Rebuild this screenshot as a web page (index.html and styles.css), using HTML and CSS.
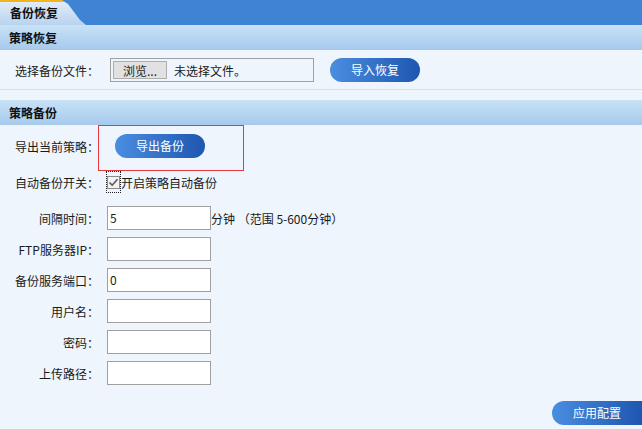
FILE: index.html
```html
<!DOCTYPE html>
<html lang="zh-CN">
<head>
<meta charset="utf-8">
<link rel="stylesheet" href="styles.css">
</head>
<body>
<div class="page">
  <div class="tabbar">
    <div class="tab">备份恢复</div>
  </div>

  <div class="sec-head">策略恢复</div>
  <div class="sec-body restore">
    <div class="row-restore">
      <span class="lbl-left">选择备份文件：</span>
      <div class="file">
        <span class="browse">浏览...</span>
        <span class="fname">未选择文件。</span>
      </div>
      <button class="btn btn-import">导入恢复</button>
    </div>
  </div>
  <div class="divider"></div>

  <div class="sec-head">策略备份</div>
  <div class="sec-body backup">
    <div class="form">
      <div class="row">
        <span class="lbl">导出当前策略：</span>
        <button class="btn btn-export">导出备份</button>
      </div>

      <div class="row row-chk">
        <span class="lbl">自动备份开关：</span>
        <span class="chk">
          <svg width="13" height="13" viewBox="0 0 13 13"><rect x="0.5" y="0.5" width="12" height="12" fill="#f2f2f2" stroke="#8c8c8c"/><path d="M2.5 6.5 L5.2 9.2 L10.5 3.2" fill="none" stroke="#555" stroke-width="1.6"/></svg>
        </span>
        <span class="chk-text">开启策略自动备份</span>
      </div>

      <div class="row row-first">
        <span class="lbl">间隔时间：</span>
        <span class="inp">5</span><span class="hint">分钟 （范围 5-600分钟）</span>
      </div>

      <div class="row row-in">
        <span class="lbl">FTP服务器IP：</span>
        <span class="inp"></span>
      </div>

      <div class="row row-in">
        <span class="lbl">备份服务端口：</span>
        <span class="inp">0</span>
      </div>

      <div class="row row-in">
        <span class="lbl">用户名：</span>
        <span class="inp"></span>
      </div>

      <div class="row row-in">
        <span class="lbl">密码：</span>
        <span class="inp"></span>
      </div>

      <div class="row row-in">
        <span class="lbl">上传路径：</span>
        <span class="inp"></span>
      </div>
    </div>
    <div class="apply-row"><button class="btn btn-apply">应用配置</button></div>
    <div class="mark"></div>
  </div>
</div>
</body>
</html>
```

FILE: styles.css
```css
* { box-sizing: border-box; }
html, body { margin: 0; padding: 0; }
body {
  width: 642px;
  height: 429px;
  overflow: hidden;
  background: #eef5fc;
  font-family: "Noto Sans CJK SC", "Microsoft YaHei", sans-serif;
  font-size: 12px;
  color: #1a1a1a;
}
.page { width: 642px; height: 429px; display: flex; flex-direction: column; }

.tabbar {
  height: 25px;
  background: #3f84d4;
  display: flex;
}
.tab {
  width: 86px;
  height: 25px;
  padding-left: 10px;
  font-weight: bold;
  line-height: 22px;
  color: #111;
  background: linear-gradient(#e0ecf8, #b9d3ef);
  border-top: 2px solid #f2b51c;
  clip-path: polygon(0 0, 62px 0, 68px 4px, 74px 12px, 80px 20px, 86px 25px, 0 25px);
}

.sec-head {
  height: 25px;
  line-height: 25px;
  padding-left: 9px;
  font-weight: bold;
  color: #111;
  background: linear-gradient(#c8e2f6, #a6c9ec);
}

.restore { height: 39px; display: flex; align-items: center; padding-top: 1px; }
.row-restore { display: flex; align-items: center; padding-left: 15px; }
.lbl-left { width: 95px; white-space: nowrap; }
.file {
  width: 204px;
  height: 24px;
  border: 1px solid #a0a0a0;
  background: #eef5fc;
  display: flex;
  align-items: center;
  padding-left: 2px;
}
.browse {
  width: 54px;
  height: 18px;
  line-height: 17px;
  text-align: center;
  background: #e1e1e1;
  border: 1px solid #adadad;
  color: #222;
}
.fname { margin-left: 7px; }

.divider { height: 11px; border-top: 1px solid #d9dfe6; }

.btn {
  border: 0;
  margin: 0;
  padding: 0;
  width: 90px;
  height: 24px;
  border-radius: 12px;
  background: linear-gradient(90deg, #4a8ee0, #1e56b0);
  color: #fff;
  font-family: inherit;
  font-size: 12px;
  line-height: 24px;
}
.btn-import { margin-left: 16px; }

.backup { position: relative; flex: 1; }
.form {
  display: flex;
  flex-direction: column;
  padding-left: 15px;
  padding-top: 9px;
}
.row { display: flex; align-items: center; height: 24px; }
.row-chk { margin-top: 12px; }
.row-first { margin-top: 12px; }
.row-in { margin-top: 7px; }
.lbl {
  width: 84px;
  margin-right: 8px;
  text-align: right;
  white-space: nowrap;
}

.btn-export { margin-left: 8px; }

.chk {
  width: 15px;
  height: 22px;
  margin-left: -1px;
  border: 1px dotted #222;
  display: flex;
  align-items: center;
  justify-content: center;
}
.chk svg { display: block; }

.inp {
  width: 104px;
  height: 24px;
  border: 1px solid #a0a0a0;
  background: #fff;
  padding-left: 2px;
  line-height: 22px;
}

.apply-row {
  position: absolute;
  right: 0;
  bottom: 4px;
}
.btn-apply { width: 90px; border-radius: 12px 0 0 12px; }

.mark {
  position: absolute;
  left: 98px;
  top: 0;
  width: 146px;
  height: 46px;
  border: 1px solid #e8383d;
}
```
